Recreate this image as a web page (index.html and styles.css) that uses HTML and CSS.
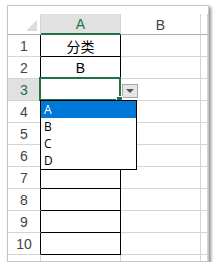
FILE: index.html
```html
<!DOCTYPE html>
<html lang="zh">
<head>
  <meta charset="UTF-8">
  <title>数据验证下拉列表</title>
  <meta name="viewport" content="width=device-width, initial-scale=1.0">
  <link rel="stylesheet" href="styles.css">
</head>
<body>
  <div class="window">
    <div class="sheet">
      <div class="corner"><span class="tri"></span></div>
      <div class="col-head active">A</div>
      <div class="col-head">B</div>
      <div class="col-head"></div>

      <div class="row-head">1</div>
      <div class="cell data">分类</div>
      <div class="cell"></div>
      <div class="cell"></div>

      <div class="row-head">2</div>
      <div class="cell data">B</div>
      <div class="cell"></div>
      <div class="cell"></div>

      <div class="row-head active">3</div>
      <div class="cell data selected">
        <span class="handle"></span>
        <span class="drop-btn"><span class="arrow"></span></span>
        <div class="list">
          <div class="item on">A</div>
          <div class="item">B</div>
          <div class="item">C</div>
          <div class="item">D</div>
        </div>
      </div>
      <div class="cell"></div>
      <div class="cell"></div>

      <div class="row-head">4</div>
      <div class="cell data"></div>
      <div class="cell"></div>
      <div class="cell"></div>

      <div class="row-head">5</div>
      <div class="cell data"></div>
      <div class="cell"></div>
      <div class="cell"></div>

      <div class="row-head">6</div>
      <div class="cell data"></div>
      <div class="cell"></div>
      <div class="cell"></div>

      <div class="row-head">7</div>
      <div class="cell data"></div>
      <div class="cell"></div>
      <div class="cell"></div>

      <div class="row-head">8</div>
      <div class="cell data"></div>
      <div class="cell"></div>
      <div class="cell"></div>

      <div class="row-head">9</div>
      <div class="cell data"></div>
      <div class="cell"></div>
      <div class="cell"></div>

      <div class="row-head">10</div>
      <div class="cell data"></div>
      <div class="cell"></div>
      <div class="cell"></div>

      <div class="row-head plain">11</div>
      <div class="cell"></div>
      <div class="cell"></div>
      <div class="cell"></div>
    </div>
  </div>
</body>
</html>
```

FILE: styles.css
```css
html, body {
  margin: 0;
  padding: 0;
  background: #fff;
}
.window {
  margin: 5px 0 0 7px;
  width: 202px;
  height: 257px;
  box-sizing: border-box;
  border: 1px solid #c6c6c6;
  padding-top: 8px;
  overflow: hidden;
  box-shadow: 2px 2px 3px rgba(0, 0, 0, 0.45);
  background: #fff;
}
.sheet {
  display: grid;
  grid-template-columns: 33px 80px 80px 1fr;
  grid-template-rows: 21px;
  grid-auto-rows: 22px;
  font-family: "Liberation Sans", "Noto Sans CJK SC", sans-serif;
  font-size: 14px;
}
.sheet > div {
  box-sizing: border-box;
  border-right: 1px solid #d4d4d4;
  border-bottom: 1px solid #d4d4d4;
  display: flex;
  align-items: center;
  justify-content: center;
}
.corner {
  position: relative;
  border-bottom-color: #ababab !important;
}
.tri {
  position: absolute;
  right: 3px;
  bottom: 3px;
  width: 0;
  height: 0;
  border-left: 11px solid transparent;
  border-bottom: 11px solid #dcdcdc;
}
.col-head {
  color: #444;
  border-bottom-color: #ababab !important;
  padding-top: 1px;
}
.col-head.active {
  background: #e1e1e1;
  color: #217346;
  border-bottom: 2px solid #217346 !important;
}
.row-head {
  color: #444;
  border-right-color: #000 !important;
}
.row-head.plain {
  border-right-color: #d4d4d4 !important;
}
.row-head.active {
  background: #e1e1e1;
  color: #217346;
}
.cell {
  color: #000;
}
.cell.data {
  border-right-color: #000 !important;
  border-bottom-color: #000 !important;
}
.selected {
  position: relative;
}
.selected::after {
  content: "";
  position: absolute;
  left: -2px;
  top: -2px;
  right: -1px;
  bottom: -1px;
  border: 2px solid #217346;
}
.handle {
  position: absolute;
  right: -3px;
  bottom: -3px;
  width: 5px;
  height: 5px;
  background: #217346;
  border: 1px solid #fff;
  z-index: 2;
}
.drop-btn {
  position: absolute;
  left: 81px;
  top: 5px;
  width: 16px;
  height: 14px;
  box-sizing: border-box;
  border: 1px solid #a6a6a6;
  background: #e6e6e6;
  display: flex;
  align-items: center;
  justify-content: center;
}
.arrow {
  width: 0;
  height: 0;
  border-left: 4px solid transparent;
  border-right: 4px solid transparent;
  border-top: 4px solid #555;
}
.list {
  position: absolute;
  left: -1px;
  top: 21px;
  width: 97px;
  height: 70px;
  box-sizing: border-box;
  border: 1px solid #000;
  background: #fff;
  z-index: 3;
  font-family: "Open Sans", "Liberation Sans", sans-serif;
  font-size: 12px;
}
.item {
  height: 17px;
  line-height: 17px;
  padding-left: 3px;
  color: #000;
}
.item.on {
  background: #0078d7;
  color: #fff;
}
```
